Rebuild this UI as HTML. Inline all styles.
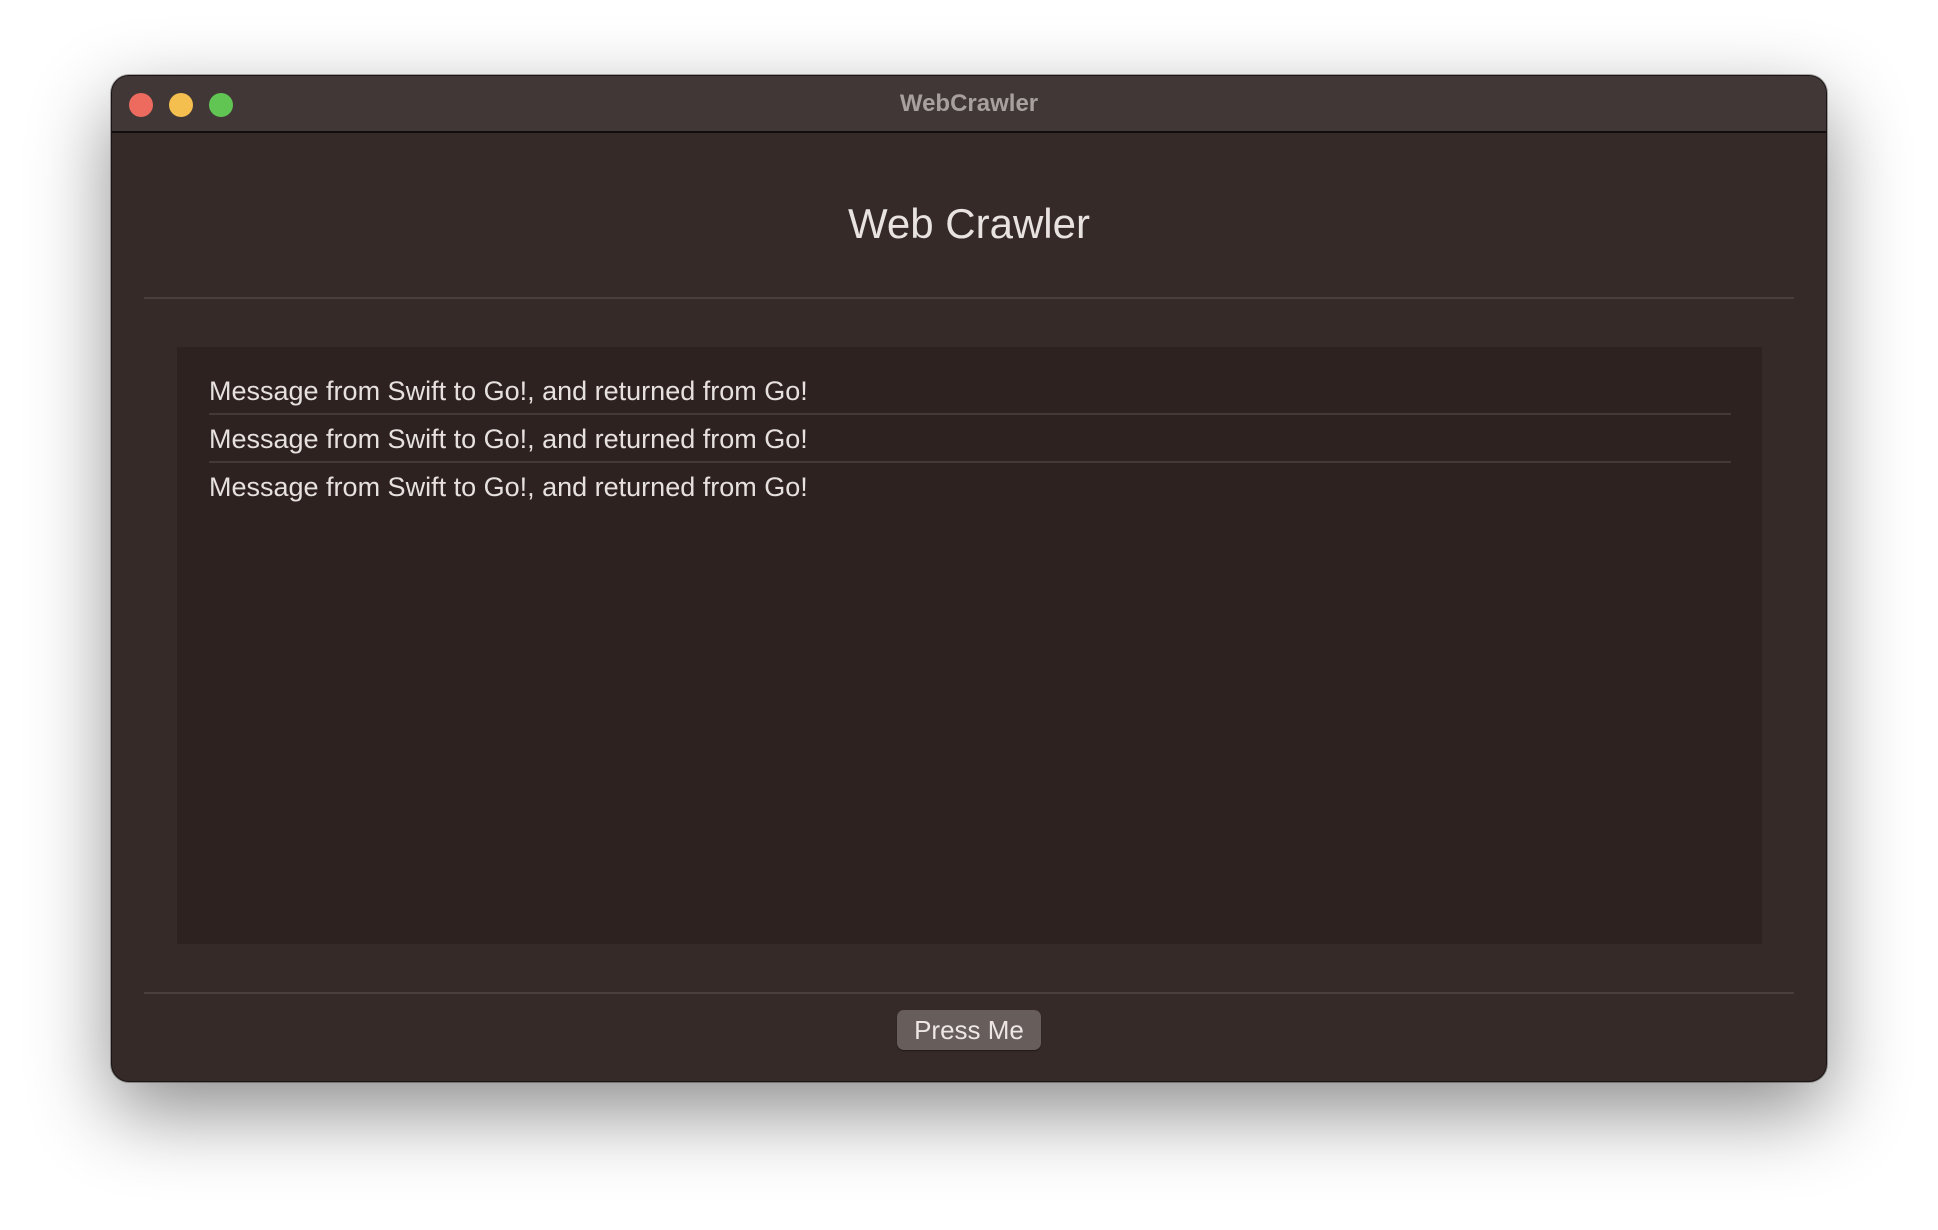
<!DOCTYPE html>
<html><head><meta charset="utf-8"><style>
*{margin:0;padding:0;box-sizing:border-box}
body{width:1938px;height:1230px;background:#fff;position:relative;overflow:hidden;font-family:"Liberation Sans",sans-serif}
.win{position:absolute;left:111px;top:75px;width:1716px;height:1007px;background:#352a28;border-radius:18px;border:1px solid #1a1514;box-shadow:0 30px 80px rgba(0,0,0,.45),0 0 0 1px rgba(0,0,0,.3);overflow:hidden}
.tb{position:absolute;left:0;top:0;right:0;height:57px;background:#403736;border-bottom:2px solid #120e0d}
.dot{position:absolute;top:17px;width:24px;height:24px;border-radius:50%}
.tt{position:absolute;left:0;right:0;top:14px;text-align:center;color:#a8a09e;font-weight:bold;font-size:24px}
.h{position:absolute;left:0;right:0;top:124px;text-align:center;color:#e8e2e0;font-size:42px}
.line{position:absolute;left:32px;right:32px;height:2px;background:#4a3f3d}
.box{position:absolute;left:65px;top:271px;width:1585px;height:597px;background:#2d2220}
.row{position:absolute;left:32px;width:1522px;color:#e6e0de;font-size:27px;height:48px;line-height:48px}
.sep{position:absolute;left:32px;width:1522px;height:2px;background:#433937}
.btn{position:absolute;left:785px;top:934px;width:144px;height:40px;border-radius:7px;background:#675d5b;color:#ece6e4;font-size:26px;text-align:center;line-height:40px;box-shadow:0 1px 1px rgba(0,0,0,.4)}
</style></head><body>
<div class="win">
<div class="tb">
<div class="dot" style="left:17px;background:#ed6a5e"></div>
<div class="dot" style="left:57px;background:#f5bf4f"></div>
<div class="dot" style="left:97px;background:#61c554"></div>
<div class="tt">WebCrawler</div>
</div>
<div class="h">Web Crawler</div>
<div class="line" style="top:221px"></div>
<div class="box">
<div class="row" style="top:20px">Message from Swift to Go!, and returned from Go!</div>
<div class="sep" style="top:66px"></div>
<div class="row" style="top:68px">Message from Swift to Go!, and returned from Go!</div>
<div class="sep" style="top:114px"></div>
<div class="row" style="top:116px">Message from Swift to Go!, and returned from Go!</div>
</div>
<div class="line" style="top:916px"></div>
<div class="btn">Press Me</div>
</div>
</body></html>
